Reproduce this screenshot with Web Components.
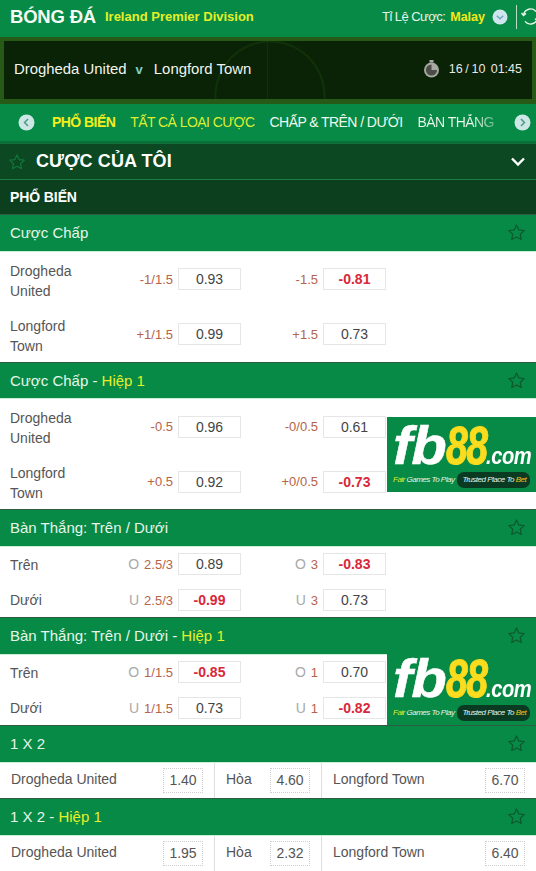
<!DOCTYPE html>
<html>
<head>
<meta charset="utf-8">
<title>Bóng Đá</title>
<style>
  html, body { margin: 0; padding: 0; background: #fff; }
  body { font-family: "Liberation Sans", Arial, sans-serif; width: 536px; height: 871px; overflow: hidden; }
</style>
</head>
<body>
<top-bar></top-bar>
<match-panel></match-panel>
<market-nav></market-nav>
<my-bets></my-bets>

<market-section>
  <span slot="title">Cược Chấp</span>
  <odds-row name="Drogheda United" tall>
    <odds-cell label="-1/1.5" value="0.93"></odds-cell>
    <odds-cell label="-1.5" value="-0.81"></odds-cell>
  </odds-row>
  <odds-row name="Longford Town" tall>
    <odds-cell label="+1/1.5" value="0.99"></odds-cell>
    <odds-cell label="+1.5" value="0.73"></odds-cell>
  </odds-row>
</market-section>

<market-section>
  <span slot="title">Cược Chấp</span><span slot="half">Hiệp 1</span>
  <odds-row name="Drogheda United" tall>
    <odds-cell label="-0.5" value="0.96"></odds-cell>
    <odds-cell label="-0/0.5" value="0.61"></odds-cell>
  </odds-row>
  <odds-row name="Longford Town" tall>
    <odds-cell label="+0.5" value="0.92"></odds-cell>
    <odds-cell label="+0/0.5" value="-0.73"></odds-cell>
  </odds-row>
  <fb-ad style="top:17.5px"></fb-ad>
</market-section>

<market-section>
  <span slot="title">Bàn Thắng: Trên / Dưới</span>
  <odds-row name="Trên">
    <odds-cell side="O" label="2.5/3" value="0.89"></odds-cell>
    <odds-cell side="O" label="3" value="-0.83"></odds-cell>
  </odds-row>
  <odds-row name="Dưới">
    <odds-cell side="U" label="2.5/3" value="-0.99"></odds-cell>
    <odds-cell side="U" label="3" value="0.73"></odds-cell>
  </odds-row>
</market-section>

<market-section>
  <span slot="title">Bàn Thắng: Trên / Dưới</span><span slot="half">Hiệp 1</span>
  <odds-row name="Trên">
    <odds-cell side="O" label="1/1.5" value="-0.85"></odds-cell>
    <odds-cell side="O" label="1" value="0.70"></odds-cell>
  </odds-row>
  <odds-row name="Dưới">
    <odds-cell side="U" label="1/1.5" value="0.73"></odds-cell>
    <odds-cell side="U" label="1" value="-0.82"></odds-cell>
  </odds-row>
  <fb-ad style="top:-5px"></fb-ad>
</market-section>

<market-section>
  <span slot="title">1 X 2</span>
  <three-way home="1.40" draw="4.60" away="6.70"></three-way>
</market-section>

<market-section>
  <span slot="title">1 X 2</span><span slot="half">Hiệp 1</span>
  <three-way home="1.95" draw="2.32" away="6.40"></three-way>
</market-section>

<script>
const STAR = `<svg viewBox="0 0 24 24" fill="none" stroke="currentColor" stroke-width="1.6" stroke-linejoin="round"><path d="M12 2.6l2.9 6.2 6.8.8-5 4.6 1.3 6.7-6-3.3-6 3.3 1.3-6.7-5-4.6 6.8-.8z"/></svg>`;

class TopBar extends HTMLElement {
  constructor() {
    super();
    this.attachShadow({mode: 'open'}).innerHTML = `
    <style>
      :host { display: flex; align-items: center; height: 37px; background: #078a45; color: #fff; overflow: hidden; box-sizing: border-box; padding: 0 0 4px 10px; }
      .sport { font-size: 18.5px; font-weight: bold; color: #f4fbf4; letter-spacing: -.2px; }
      .league { font-size: 13px; font-weight: bold; color: #e4ef2a; margin-left: 9px; flex: 1; }
      .rate { font-size: 13px; letter-spacing: -.55px; color: #e6f5ea; }
      .type { font-size: 12.5px; font-weight: bold; color: #f6e818; margin-left: 5px; }
      .drop { width: 16px; height: 16px; margin-left: 7px; }
      .sep { width: 1px; height: 24px; background: #b9dcc5; margin: 0 0 0 8px; }
      .refresh { width: 19px; height: 19px; margin: 0 -4px 0 4px; flex: none; }
    </style>
    <span class="sport">BÓNG ĐÁ</span>
    <span class="league">Ireland Premier Division</span>
    <span class="rate">Tỉ Lệ Cược:</span>
    <span class="type">Malay</span>
    <svg class="drop" viewBox="0 0 16 16"><circle cx="8" cy="8" r="7.5" fill="#cfe6ee"/><path d="M4.8 6.8L8 9.8l3.2-3" fill="none" stroke="#6da9c0" stroke-width="1.5"/></svg>
    <span class="sep"></span>
    <svg class="refresh" viewBox="0 0 19 19" fill="none" stroke="#e8f5ec" stroke-width="1.4"><path d="M2.6 8A7 7 0 0 1 15 4.6"/><path d="M16.4 11A7 7 0 0 1 4 14.4"/><path d="M.5 6l2 2.4L5 6.4M18.5 13l-2-2.4-2.5 2"/></svg>`;
  }
}
customElements.define('top-bar', TopBar);

class MatchPanel extends HTMLElement {
  constructor() {
    super();
    this.attachShadow({mode: 'open'}).innerHTML = `
    <style>
      :host { display: block; height: 67px; box-sizing: border-box; border: 4px solid #285a17; border-width: 4px 4px 5px; background-color: #0a2205; background-image: radial-gradient(circle at 266px 55px, transparent 0 53px, #103208 54px 55px, transparent 56px), linear-gradient(90deg, transparent 263px, #103208 263px 264px, transparent 264px); color: #f1f5ee; }
      .in { display: flex; align-items: center; height: 100%; padding: 0 10px 2px; font-size: 14.9px; box-sizing: border-box; }
      .v { color: #7fd0c8; font-weight: bold; font-size: 13px; margin: 0 11px 0 9px; }
      .teams { flex: 1; display: flex; align-items: center; }
      svg { width: 17px; height: 18px; margin-right: 9px; }
      .when { font-size: 12.5px; color: #e8e8e4; word-spacing: -.8px; }
    </style>
    <div class="in">
      <div class="teams"><span>Drogheda United</span><span class="v">v</span><span>Longford Town</span></div>
      <svg viewBox="0 0 17 18"><rect x="6.5" y="0" width="4" height="2.5" fill="#aaa"/><circle cx="8.5" cy="10" r="7.5" fill="#a9a9a4"/><path d="M8.5 10V4.4A5.6 5.6 0 1 0 14.1 10z" fill="#4c4d47"/></svg>
      <span class="when">16 / 10 &nbsp;01:45</span>
    </div>`;
  }
}
customElements.define('match-panel', MatchPanel);

class MarketNav extends HTMLElement {
  constructor() {
    super();
    this.attachShadow({mode: 'open'}).innerHTML = `
    <style>
      :host { display: flex; align-items: center; height: 40px; box-sizing: border-box; background: linear-gradient(#068a45 0 37px, #0a7038 37px); padding: 0 5px 4px 18px; }
      svg { width: 17px; height: 17px; flex: none; }
      .list { flex: 1; display: flex; gap: 15px; white-space: nowrap; margin: 0 19px 0 17px; font-size: 14px; letter-spacing: -.57px; }
      .on { font-weight: bold; color: #f3ee1e; letter-spacing: -.55px; }
      .all { color: #dfec32; }
      .plain { color: #eef8ef; }
      .fade { background: linear-gradient(90deg, #eef8ef 70%, #6fb98c 100%); -webkit-background-clip: text; background-clip: text; color: transparent; }
    </style>
    <svg viewBox="0 0 17 17"><circle cx="8.5" cy="8.5" r="8" fill="#cde6e6"/><path d="M10 5L6.6 8.5 10 12" fill="none" stroke="#4f9d8a" stroke-width="1.6"/></svg>
    <div class="list">
      <span class="on">PHỔ BIẾN</span>
      <span class="all">TẤT CẢ LOẠI CƯỢC</span>
      <span class="plain">CHẤP &amp; TRÊN / DƯỚI</span>
      <span class="fade">BÀN THẮNG</span>
    </div>
    <svg viewBox="0 0 17 17"><circle cx="8.5" cy="8.5" r="8" fill="#cde6e6"/><path d="M7 5l3.4 3.5L7 12" fill="none" stroke="#4f9d8a" stroke-width="1.6"/></svg>`;
  }
}
customElements.define('market-nav', MarketNav);

class MyBets extends HTMLElement {
  constructor() {
    super();
    this.attachShadow({mode: 'open'}).innerHTML = `
    <style>
      :host { display: block; color: #fff; }
      .mine { display: flex; align-items: center; height: 35px; background: #0c4822; border-bottom: 1px solid #1f7a48; padding: 0 9px 0 8px; }
      .star { width: 18px; height: 18px; color: #14753c; }
      .mine b { flex: 1; margin-left: 10px; font-size: 18px; letter-spacing: .1px; }
      .chev { width: 16px; height: 12px; margin-right: 1px; }
      .pop { display: flex; align-items: center; height: 34px; background: #0b3f1e; padding-left: 10px; font-size: 14px; font-weight: bold; letter-spacing: -.1px; }
    </style>
    <div class="mine">
      <span class="star">${STAR}</span>
      <b>CƯỢC CỦA TÔI</b>
      <svg class="chev" viewBox="0 0 16 12"><path d="M2 2.5l6 6 6-6" fill="none" stroke="#fff" stroke-width="2.4"/></svg>
    </div>
    <div class="pop">PHỔ BIẾN</div>`;
  }
}
customElements.define('my-bets', MyBets);

class MarketSection extends HTMLElement {
  constructor() {
    super();
    const half = this.querySelector('[slot=half]');
    this.attachShadow({mode: 'open'}).innerHTML = `
    <style>
      :host { display: block; }
      .head { display: flex; align-items: center; height: 37.6px; box-sizing: border-box; background: #078a45; border-top: 1px solid #2f5a44; border-bottom: 1px solid #c9efd8; padding: 0 10px; font-size: 15px; color: #e6f6ea; }
      .title { flex: 1; }
      ::slotted([slot=half]) { color: #e6f02a; }
      .star { width: 19px; height: 19px; color: #0d5a2c; }
      .rows { position: relative; }
    </style>
    <div class="head">
      <span class="title"><slot name="title"></slot>${half ? ' - ' : ''}<slot name="half"></slot></span>
      <span class="star">${STAR}</span>
    </div>
    <div class="rows"><slot></slot></div>`;
  }
}
customElements.define('market-section', MarketSection);

class OddsRow extends HTMLElement {
  constructor() {
    super();
    this.attachShadow({mode: 'open'}).innerHTML = `
    <style>
      :host { display: grid; grid-template-columns: 100px 131px 145px; align-items: center; height: 35.2px; padding-left: 10px; background: #fff; font-size: 14px; color: #555; }
      :host([tall]) { height: 55px; }
      .name { line-height: 20px; width: 70px; padding-top: 1px; }
      :host([tall]) .name { padding-top: 3px; }
    </style>
    <span class="name">${this.getAttribute('name')}</span>
    <slot></slot>`;
  }
}
customElements.define('odds-row', OddsRow);

class OddsCell extends HTMLElement {
  constructor() {
    super();
    const value = this.getAttribute('value');
    const side = this.getAttribute('side');
    this.attachShadow({mode: 'open'}).innerHTML = `
    <style>
      :host { display: flex; align-items: center; justify-content: flex-end; gap: 5px; font-size: 14px; }
      .label { color: #b5634a; white-space: pre; font-size: 13px; }
      .side { color: #a9a9a9; margin-right: 5px; font-size: 14px; }
      .box { width: 61px; height: 20px; border: 1px solid #e6e6e6; display: flex; align-items: center; justify-content: center; color: #444; background: #fff; }
      .box.neg { color: #d8283a; font-weight: bold; }
    </style>
    <span class="label">${side ? `<span class="side">${side}</span>` : ''}${this.getAttribute('label')}</span>
    <span class="box ${value.startsWith('-') ? 'neg' : ''}">${value}</span>`;
  }
}
customElements.define('odds-cell', OddsCell);

class ThreeWay extends HTMLElement {
  constructor() {
    super();
    const cell = (name, val, w) => `<div class="cell" style="width:${w}px"><span class="name">${name}</span><span class="box">${val}</span></div>`;
    this.attachShadow({mode: 'open'}).innerHTML = `
    <style>
      :host { display: flex; height: 35.4px; background: #fff; font-size: 14px; color: #555; }
      .cell { display: flex; align-items: center; justify-content: space-between; box-sizing: border-box; padding: 0 11px; border-right: 1px solid #dedede; }
      .cell:last-child { border-right: 0; }
      .name { padding-bottom: 2px; }
      .box { width: 38px; height: 22px; border: 1px dotted #cfcfcf; display: flex; align-items: center; justify-content: center; color: #555; padding-bottom: 1px; box-sizing: content-box; }
    </style>
    ${cell('Drogheda United', this.getAttribute('home'), 215)}
    ${cell('Hòa', this.getAttribute('draw'), 107)}
    ${cell('Longford Town', this.getAttribute('away'), 214)}`;
  }
}
customElements.define('three-way', ThreeWay);

class FbAd extends HTMLElement {
  constructor() {
    super();
    this.attachShadow({mode: 'open'}).innerHTML = `
    <style>
      :host { display: block; position: absolute; right: 0; width: 149px; height: 75px; z-index: 2; background: #078a45; font-family: "Liberation Sans", Arial, sans-serif; font-style: italic; overflow: hidden; }
      .logo { display: flex; align-items: baseline; height: 53px; padding: 2px 0 0 6px; font-weight: bold; color: #fff; white-space: nowrap; line-height: 54px; }
      .part { display: inline-block; transform-origin: 0 100%; flex: none; }
      .fb { font-size: 53px; letter-spacing: -1px; transform: scaleX(1.1); margin-right: 5px; -webkit-text-stroke: .5px #fff; }
      .y { color: #fbdc1e; font-size: 53px; letter-spacing: -2px; transform: scaleX(.74); margin-right: -14.5px; -webkit-text-stroke: 1px #fbdc1e; }
      .com { font-size: 24px; letter-spacing: -.5px; transform: scaleX(.84); margin-right: -9px; }
      .tag { display: flex; align-items: center; gap: 3px; padding-left: 6px; font-size: 8px; color: #e9f4ea; letter-spacing: -.5px; white-space: nowrap; }
      .pill { background: #0a3a22; border-radius: 7px; padding: 3px 4px 4px 5px; letter-spacing: -.5px; }
      .g { color: #dff02a; }
      .o { color: #f2c31e; }
    </style>
    <div class="logo"><span class="part fb">fb</span><span class="part y">88</span><span class="part com">.com</span></div>
    <div class="tag"><span><span class="g">Fair</span> Games To Play</span><span class="pill">Trusted Place To <span class="o">Bet</span></span></div>`;
  }
}
customElements.define('fb-ad', FbAd);
</script>
</body>
</html>
